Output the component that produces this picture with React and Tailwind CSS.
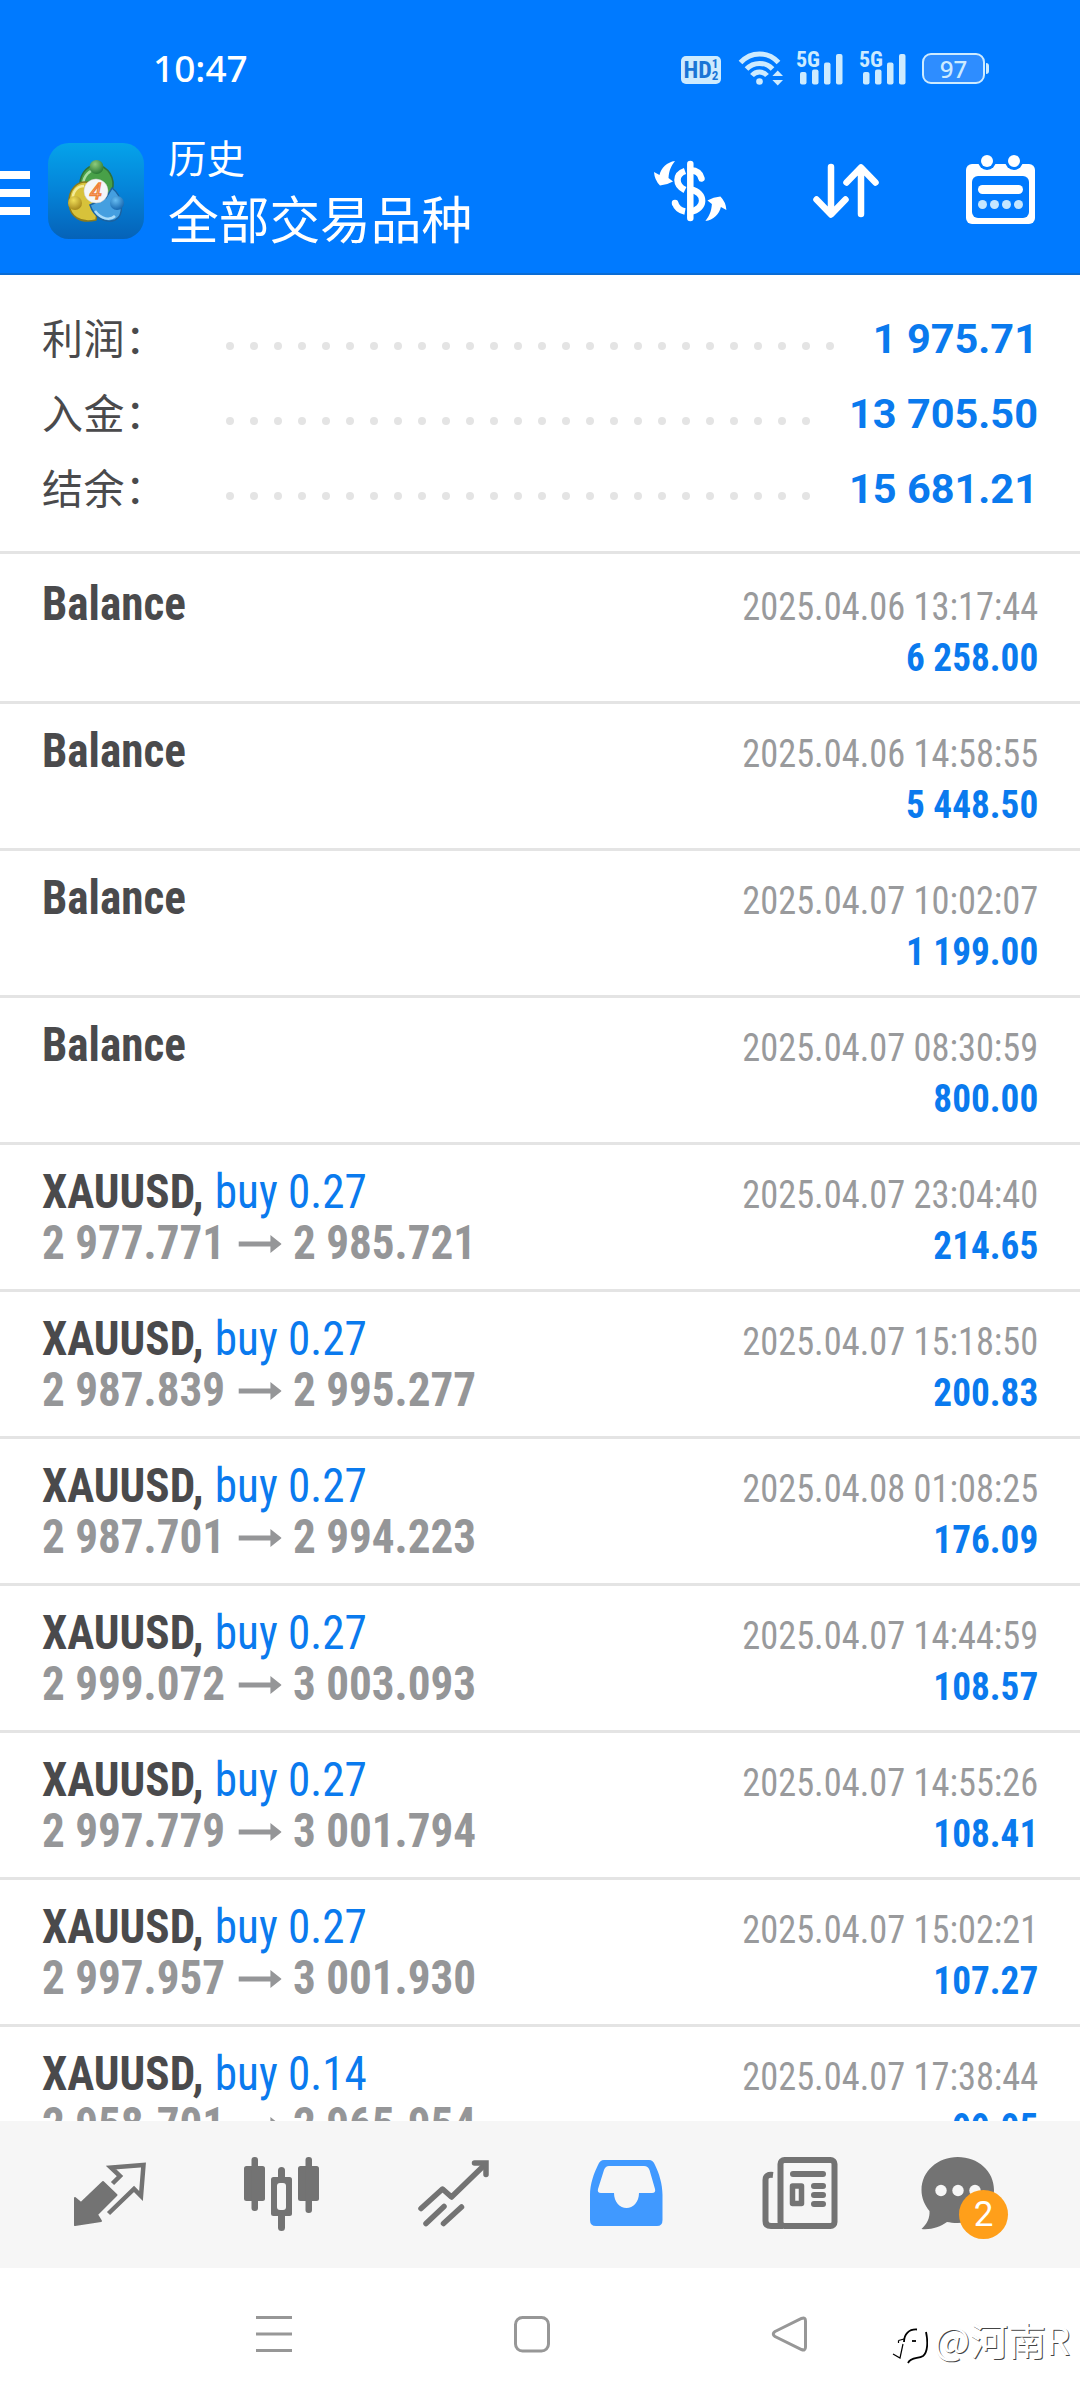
// Trade history screen: account totals, list of deals and the bottom tab bar.

const summary = [
  { label: "利润：", value: "1 975.71", dots: 26 },
  { label: "入金：", value: "13 705.50", dots: 25 },
  { label: "结余：", value: "15 681.21", dots: 25 },
];

const deals = [
  { time: "2025.04.06 13:17:44", profit: "6 258.00" },
  { time: "2025.04.06 14:58:55", profit: "5 448.50" },
  { time: "2025.04.07 10:02:07", profit: "1 199.00" },
  { time: "2025.04.07 08:30:59", profit: "800.00" },
  { symbol: "XAUUSD", side: "buy 0.27", open: "2 977.771", close: "2 985.721", time: "2025.04.07 23:04:40", profit: "214.65" },
  { symbol: "XAUUSD", side: "buy 0.27", open: "2 987.839", close: "2 995.277", time: "2025.04.07 15:18:50", profit: "200.83" },
  { symbol: "XAUUSD", side: "buy 0.27", open: "2 987.701", close: "2 994.223", time: "2025.04.08 01:08:25", profit: "176.09" },
  { symbol: "XAUUSD", side: "buy 0.27", open: "2 999.072", close: "3 003.093", time: "2025.04.07 14:44:59", profit: "108.57" },
  { symbol: "XAUUSD", side: "buy 0.27", open: "2 997.779", close: "3 001.794", time: "2025.04.07 14:55:26", profit: "108.41" },
  { symbol: "XAUUSD", side: "buy 0.27", open: "2 997.957", close: "3 001.930", time: "2025.04.07 15:02:21", profit: "107.27" },
  { symbol: "XAUUSD", side: "buy 0.14", open: "2 958.701", close: "2 965.954", time: "2025.04.07 17:38:44", profit: "99.05" },
];

function Signal() {
  return (
    <div className="relative w-[47px] h-[34px] mr-4">
      <span className="absolute left-0 top-[-2px] font-['Roboto_Condensed'] font-bold text-[22px] leading-[22px]">5G</span>
      <svg className="w-full h-full" viewBox="0 0 47 34" fill="currentColor">
        <rect x="4" y="21" width="6.5" height="12.5" rx="2" />
        <rect x="16" y="18.5" width="6.5" height="15" rx="2" />
        <rect x="28" y="11.5" width="6.5" height="22" rx="2" />
        <rect x="40" y="3" width="6.5" height="30.5" rx="2" />
      </svg>
    </div>
  );
}

function StatusBar() {
  return (
    <div className="flex h-[110px] pt-[51px] items-start text-[#cdebff]">
      <span className="ml-[153px] -mt-1 font-['Noto_Sans'] font-medium text-[37px] leading-[42px] text-white">10:47</span>
      <div className="ml-auto flex h-[34px]">
        <div className="flex w-10 h-7 mt-[5px] mr-[17px] rounded-[5px] bg-[#cdebff] text-[#1a75d6] font-['Roboto_Condensed'] font-bold justify-center items-center">
          <span className="text-[24px] leading-7">HD</span>
          <span className="flex flex-col text-[13px] leading-[12px]">
            <span>1</span>
            <span>2</span>
          </span>
        </div>
        <svg className="w-[46px] h-[35px] mr-3" viewBox="738 51 46 35" fill="none" stroke="currentColor" strokeWidth="5">
          <path d="M740.5 62.500C751 51 768 51 778.500 62.500" />
          <path d="M746.500 69C753.500 61.500 765.500 61.500 772.500 69" />
          <path d="M752 75.500C756 70.800 763 70.800 767 75.500" />
          <circle cx="759.500" cy="81.500" r="3.300" fill="currentColor" stroke="none" />
          <path d="M777.700 70.500l5.300 5.500h-10.600zM777.700 85.500l5.300-5.500h-10.600z" fill="currentColor" stroke="none" />
        </svg>
        <Signal />
        <Signal />
        <div className="w-[63px] h-[31px] mt-[2px] rounded-[9px] border-2 border-current bg-[#2e8dff] text-center font-['Noto_Sans'] font-medium text-[24px] leading-[27px]">
          97
        </div>
        <div className="w-[3px] h-[11px] mt-3 ml-px mr-[91px] rounded-r-sm bg-current" />
      </div>
    </div>
  );
}

function AppLogo() {
  return (
    <svg className="w-24 h-24" viewBox="48 143 96 96">
      <defs>
        <linearGradient id="tile" x1="0" y1="0" x2="0" y2="1">
          <stop offset="0" stopColor="#05a3ea" />
          <stop offset="0.5" stopColor="#0583d8" />
          <stop offset="1" stopColor="#0562b8" />
        </linearGradient>
        <radialGradient id="green" cx="0.4" cy="0.3" r="0.7">
          <stop offset="0" stopColor="#8ecb7c" />
          <stop offset="1" stopColor="#2a7a35" />
        </radialGradient>
        <radialGradient id="gold" cx="0.4" cy="0.3" r="0.7">
          <stop offset="0" stopColor="#f0de58" />
          <stop offset="1" stopColor="#a88a1c" />
        </radialGradient>
        <radialGradient id="azure" cx="0.4" cy="0.3" r="0.7">
          <stop offset="0" stopColor="#68bdf2" />
          <stop offset="1" stopColor="#1768b0" />
        </radialGradient>
      </defs>
      <rect x="48" y="143" width="96" height="96" rx="21" fill="url(#tile)" />
      <path d="M80 191C78 175 86 166 96 165C108 166 116 178 112 191L106 200L90 186Z" fill="#48a048" stroke="#2f7038" strokeWidth="1.500" />
      <path d="M83 184C84 175 90 170 95 170" fill="none" stroke="#a5dda0" strokeWidth="2.500" />
      <path d="M91 183C77 179 68 190 69 204C70 216 80 224 96 220L98 206L86 196Z" fill="#d7c23a" stroke="#8a7a1c" strokeWidth="1.500" />
      <path d="M73 200C72 191 78 186 84 186" fill="none" stroke="#f3eb96" strokeWidth="2.500" />
      <path d="M90 205C94 217 105 224 115 220C124 216 124 197 112 188L106 198Z" fill="#459fe0" stroke="#1b62a0" strokeWidth="1.500" />
      <path d="M95 211C101 219 110 221 115 216" fill="none" stroke="#a9dcfa" strokeWidth="2.500" />
      <circle cx="96.500" cy="167" r="7" fill="url(#green)" />
      <circle cx="75" cy="203" r="7" fill="url(#gold)" />
      <circle cx="117" cy="203" r="7" fill="url(#azure)" />
      <circle cx="96" cy="191" r="12" fill="#f4f6f8" stroke="#ccc" strokeWidth="0.500" />
      <text x="95.500" y="198.500" textAnchor="middle" fontSize="21" fontStyle="italic" fontFamily="Open Sans" fill="#fff" stroke="#f08038" strokeWidth="1.300">4</text>
    </svg>
  );
}

function Toolbar() {
  return (
    <div className="flex h-[163px]">
      <div className="w-[30px] flex flex-col gap-2.5 pt-[61px]">
        <div className="h-2 bg-white" />
        <div className="h-2 bg-white" />
        <div className="h-2 bg-white" />
      </div>
      <div className="ml-[18px] pt-[33px]">
        <AppLogo />
      </div>
      <div className="ml-6 pt-[19px] font-['Noto_Sans_CJK_SC',sans-serif]">
        <p className="text-[38.5px] leading-[54px]">历史</p>
        <p className="text-[50.7px] leading-[68px]">全部交易品种</p>
      </div>
      <svg className="ml-auto w-[82px] h-[80px] mt-[42px]" viewBox="650 152 82 80" fill="none" stroke="#fff" strokeWidth="6.500">
        <path d="M690.300 164V218" strokeLinecap="round" />
        <path d="M701.500 178.500C700.500 174 697.500 170.500 690.500 170.200" strokeLinecap="round" />
        <path d="M685 171C675 174.500 675 185 685 190" />
        <path d="M690.500 189.500C706.500 192.500 705.500 209.500 690.500 211.500" />
        <path d="M675 203C676.500 207.500 679.500 210.500 685 211.500" />
        <path d="M675 203v.1" strokeLinecap="round" />
        <g fill="#fff" stroke="none">
          <path d="M675 161C667 162 661 168 659.500 175L654 172Q654.500 180 660 185.500Q667 185 673 181.500L668.500 178C669 171 671 166 675 161Z" />
          <path transform="rotate(180 690.200 191)" d="M675 161C667 162 661 168 659.500 175L654 172Q654.500 180 660 185.500Q667 185 673 181.500L668.500 178C669 171 671 166 675 161Z" />
        </g>
      </svg>
      <svg className="ml-[74px] w-[80px] h-[80px] mt-[42px]" viewBox="806 152 80 80" fill="none" stroke="#fff" strokeWidth="6.500" strokeLinecap="round" strokeLinejoin="round">
        <path d="M831 167V214M816.500 199.500L831 214.500L845.500 199.500M861 214V168M846.500 182.500L861 167.500L875.500 182.500" />
      </svg>
      <svg className="ml-[76px] w-[80px] h-[80px] mt-[42px] mr-[38px]" viewBox="962 152 80 80">
        <rect x="966" y="164" width="69" height="60" rx="6" fill="#fff" />
        <circle cx="987" cy="161" r="9" fill="#007aff" />
        <circle cx="1014" cy="161" r="9" fill="#007aff" />
        <circle cx="987" cy="161" r="6" fill="#fff" />
        <circle cx="1014" cy="161" r="6" fill="#fff" />
        <rect x="972" y="176" width="57" height="42" rx="6" fill="#007aff" />
        <rect x="978" y="185" width="45" height="9" rx="4.500" fill="#fff" />
        <g fill="#c4e6ff">
          <circle cx="982.500" cy="204.500" r="4.500" />
          <circle cx="994.500" cy="204.500" r="4.500" />
          <circle cx="1006.500" cy="204.500" r="4.500" />
          <circle cx="1018.500" cy="204.500" r="4.500" />
        </g>
      </svg>
    </div>
  );
}

function SummaryRow({ label, value, dots }) {
  return (
    <div className="flex h-[75px] items-start">
      <span className="w-[184px] -mt-[3px] font-['Noto_Sans_CJK_SC',sans-serif] text-[41px] leading-[60px] tracking-[0.5px] text-[#4a4a4c]">{label}</span>
      <div className="flex gap-4 mt-[33px]">
        {[...Array(dots)].map((_, i) => (
          <span key={i} className="size-2 rounded-full bg-[#e4e4e4]" />
        ))}
      </div>
      <span className="ml-auto font-['Roboto'] font-bold text-[41.5px] leading-[60px] text-[#0a7aee]">{value}</span>
    </div>
  );
}

function DealRow({ deal }) {
  return (
    <div className="shrink-0 flex justify-between h-[147px] border-t-[3px] border-[#e4e4e4] px-[42px] pt-[21px] leading-[51px] first:h-[150px] first:pt-6 font-['Roboto_Condensed'] whitespace-pre">
      <div className="text-[48px] font-bold text-[#4a4a4c] origin-top-left scale-x-[0.94]">
        {deal.symbol ? (
          <>
            <p>
              {deal.symbol}, <span className="ml-px font-normal text-[#0a7aee]">{deal.side}</span>
            </p>
            <div className="flex text-[#959698]">
              <span className="w-[209px]">{deal.open}</span>
              <svg className="w-[46px] h-[18px] mt-[18px] mr-3" viewBox="0 0 46 18" fill="currentColor">
                <path d="M0 6.500H34V0L46 9L34 18V11.500H0Z" />
              </svg>
              <span>{deal.close}</span>
            </div>
          </>
        ) : (
          <p>Balance</p>
        )}
      </div>
      <div className="pt-1 text-right text-[39px]">
        <p className="text-[#999a9c] origin-right scale-x-[0.933]">{deal.time}</p>
        <p className="font-bold text-[#0a7aee] origin-right scale-x-[0.955]">{deal.profit}</p>
      </div>
    </div>
  );
}

function TabBar() {
  return (
    <div className="grid grid-cols-6 h-[147px] px-6 bg-[#f6f6f6] text-[#737373]">
      {/* Quotes */}
      <svg viewBox="24 2121 172 147" fill="none" stroke="currentColor">
        <path d="M75 2198L81 2203L103 2182L116.500 2195L97 2214.500L101 2221L75 2225Z" fill="currentColor" strokeWidth="2" strokeLinejoin="round" />
        <path d="M112.500 2183.500L120 2176L111 2167.500L143.500 2165L141 2196L134 2189L108.500 2213.500" strokeWidth="4.500" />
      </svg>
      {/* Charts */}
      <svg viewBox="196 2121 172 147" fill="currentColor">
        <rect x="244" y="2166" width="21" height="35" rx="2.500" />
        <rect x="251.500" y="2157" width="6.500" height="54" rx="3" />
        <rect x="298" y="2166" width="21" height="35" rx="2.500" />
        <rect x="305.500" y="2157" width="6.500" height="56" rx="3" />
        <rect x="278" y="2167" width="7" height="64" rx="3.500" />
        <rect x="271" y="2177" width="21" height="39" rx="2.500" />
        <rect x="277" y="2183" width="9" height="27" rx="3" fill="#f6f6f6" />
      </svg>
      {/* Trade */}
      <svg viewBox="368 2121 172 147" fill="none" stroke="currentColor" strokeWidth="5.500" strokeLinecap="round">
        <path d="M421 2208.500L442.500 2189L451.500 2197L484.500 2165" strokeLinejoin="round" />
        <path d="M474.500 2163H486V2174.500" />
        <path d="M426 2223.500L444 2206.500M443.500 2223.500L461.500 2207" />
      </svg>
      {/* History */}
      <svg viewBox="540 2121 172 147">
        <path d="M604 2160H649Q653 2160 655 2165C659 2173 662.500 2184 662.500 2195V2220Q662.500 2226 657 2226H596Q590 2226 590 2220V2195C590 2184 594 2173 598 2165Q600 2160 604 2160Z" fill="#4099ff" />
        <path d="M609 2166H644Q648 2166 649.500 2170L655 2189Q656 2193 652 2193H639C639 2202 633 2208 626.500 2208C620 2208 614 2202 614 2193H601Q597 2193 598 2189L604 2170Q605.500 2166 609 2166Z" fill="#f6f6f6" />
      </svg>
      {/* News */}
      <svg viewBox="712 2121 172 147" fill="none" stroke="currentColor" strokeWidth="6">
        <rect x="780.500" y="2160" width="54" height="66" rx="4" />
        <path d="M773 2175Q765.500 2174 765.500 2180V2221Q765.500 2226 771 2226H783" />
        <path d="M793 2174H823M814 2186H823M814 2195H823M814 2204H823" strokeLinecap="round" />
        <rect x="792.500" y="2186" width="9" height="17.500" strokeWidth="5.500" strokeLinejoin="round" />
      </svg>
      {/* Messages */}
      <div className="relative">
        <svg className="w-full h-full" viewBox="884 2121 172 147">
          <path d="M957.700 2157C978 2157 994 2171 994 2190C994 2209 978 2223 957.700 2223C953 2223 950 2222.500 947 2222C940 2227 931 2230 921.500 2229C927 2224 930 2218 929.500 2211C924.500 2205 921.500 2198 921.500 2190C921.500 2171 938 2157 957.700 2157Z" fill="currentColor" />
          <circle cx="941" cy="2190.500" r="5.700" fill="#f6f6f6" />
          <circle cx="958" cy="2190.500" r="5.700" fill="#f6f6f6" />
          <circle cx="975" cy="2190.500" r="5.700" fill="#f6f6f6" />
        </svg>
        <span className="absolute left-[75px] top-[69px] size-[49px] rounded-full bg-[#ff9f1a] text-center text-white font-['Roboto'] text-[35px] leading-[49px]">2</span>
      </div>
    </div>
  );
}

function SystemNav() {
  return (
    <div className="relative flex h-[132px] bg-white">
      <svg className="w-[1080px] h-[132px]" viewBox="0 2268 1080 132" fill="none" stroke="#979797" strokeWidth="3">
        <path d="M256 2317.500H292M256 2334H292M256 2350.500H292" />
        <rect x="515.500" y="2317.500" width="33" height="33.500" rx="7" />
        <path d="M775 2331.500L801.500 2318.500Q805.500 2317 805.500 2321V2347Q805.500 2351 801.500 2349.500L775 2336.500Q771.500 2334 775 2331.500Z" />
      </svg>
      {/* Author mark in the corner */}
      <div className="absolute left-[892px] top-[45px] flex items-center">
        <svg className="w-[36px] h-[40px] mt-3 mr-1.5" viewBox="0 0 36 40" fill="none" stroke="#000" strokeWidth="1.800">
          <path d="M12 17C12 9 17 4 25 4.500" />
          <path d="M6.500 15.500L12 14M6.500 15.500V18" strokeWidth="1.200" />
          <path d="M11 19L8 33L1 29" strokeWidth="1.200" />
          <path d="M34 7C36 16 36 27 31 31C26 34 19 32 16 38" />
          <path d="M20 16H24" />
        </svg>
        <span className="font-['Noto_Sans_CJK_SC',sans-serif] text-[38px] leading-[40px] text-white [text-shadow:1px_1px_0_#444]">@河南R</span>
      </div>
    </div>
  );
}

export default function App() {
  return (
    <div className="w-[1080px] h-[2400px] flex flex-col bg-white overflow-hidden">
      <header className="h-[275px] shrink-0 bg-[#007aff] text-white border-b-2 border-[#0a6cd4]">
        <StatusBar />
        <Toolbar />
      </header>
      <section className="h-[276px] shrink-0 pl-[42px] pr-[42px] pt-[34px]">
        {summary.map((row) => (
          <SummaryRow key={row.label} {...row} />
        ))}
      </section>
      <main className="h-[1570px] shrink-0 flex flex-col overflow-hidden">
        {deals.map((deal) => (
          <DealRow key={deal.time} deal={deal} />
        ))}
      </main>
      <TabBar />
      <SystemNav />
    </div>
  );
}
